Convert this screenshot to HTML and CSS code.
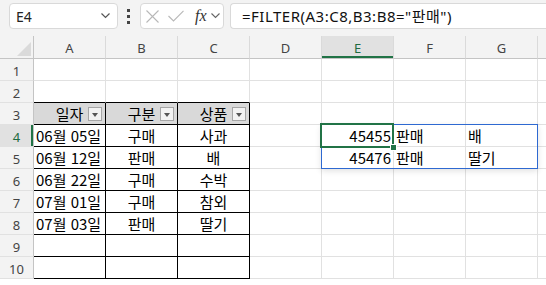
FILE: index.html
```html
<!DOCTYPE html>
<html lang="ko">
<head>
  <meta charset="UTF-8">
  <title>Excel - FILTER</title>
  <link rel="stylesheet" href="styles.css">
</head>
<body>
  <div class="toolbar">
    <div class="namebox">
      <span>E4</span>
      <svg class="chev" width="9" height="6" viewBox="0 0 9 6"><polyline points="0.5,0.5 4.5,4.5 8.5,0.5" fill="none" stroke="#555" stroke-width="1.2"/></svg>
    </div>
    <svg class="dots" width="3" height="15" viewBox="0 0 3 15"><rect x="0" y="0" width="3" height="3" fill="#444"/><rect x="0" y="6" width="3" height="3" fill="#444"/><rect x="0" y="12" width="3" height="3" fill="#444"/></svg>
    <div class="fxbox">
      <svg width="13" height="13" viewBox="0 0 13 13"><path d="M0.5 0.5 L12.5 12.5 M12.5 0.5 L0.5 12.5" stroke="#b8b8b8" stroke-width="1.1" fill="none"/></svg>
      <svg width="16" height="12" viewBox="0 0 16 12"><polyline points="0.5,6 5.5,11 15.5,0.8" stroke="#b8b8b8" stroke-width="1.1" fill="none"/></svg>
      <span class="fx">fx</span>
      <svg class="chev" width="9" height="6" viewBox="0 0 9 6"><polyline points="0.5,0.5 4.5,4.5 8.5,0.5" fill="none" stroke="#666" stroke-width="1.1"/></svg>
    </div>
    <div class="formula">=FILTER(A3:C8,B3:B8="판매")</div>
  </div>

  <div class="sheet">
    <table class="grid">
      <colgroup>
        <col class="c-rh">
        <col class="c-col" span="7">
        <col class="c-rest">
      </colgroup>
      <thead>
        <tr>
          <th class="corner"><span class="tri"></span></th>
          <th>A</th><th>B</th><th>C</th><th>D</th><th class="sel">E</th><th>F</th><th>G</th><th></th>
        </tr>
      </thead>
      <tbody>
        <tr><th>1</th><td></td><td></td><td></td><td></td><td></td><td></td><td></td><td></td></tr>
        <tr><th>2</th><td class="top"></td><td class="top"></td><td class="top"></td><td></td><td></td><td></td><td></td><td></td></tr>
        <tr>
          <th>3</th>
          <td class="t head">일자<span class="filter"></span></td>
          <td class="t head">구분<span class="filter"></span></td>
          <td class="t head">상품<span class="filter"></span></td>
          <td></td><td></td><td></td><td></td><td></td>
        </tr>
        <tr>
          <th class="sel">4</th>
          <td class="t">06월 05일</td><td class="t mid">구매</td><td class="t mid">사과</td>
          <td></td><td class="num">45455</td><td class="txt">판매</td><td class="txt">배</td><td></td>
        </tr>
        <tr>
          <th>5</th>
          <td class="t">06월 12일</td><td class="t mid">판매</td><td class="t mid">배</td>
          <td></td><td class="num">45476</td><td class="txt">판매</td><td class="txt">딸기</td><td></td>
        </tr>
        <tr>
          <th>6</th>
          <td class="t">06월 22일</td><td class="t mid">구매</td><td class="t mid">수박</td>
          <td></td><td></td><td></td><td></td><td></td>
        </tr>
        <tr>
          <th>7</th>
          <td class="t">07월 01일</td><td class="t mid">구매</td><td class="t mid">참외</td>
          <td></td><td></td><td></td><td></td><td></td>
        </tr>
        <tr>
          <th>8</th>
          <td class="t">07월 03일</td><td class="t mid">판매</td><td class="t mid">딸기</td>
          <td></td><td></td><td></td><td></td><td></td>
        </tr>
        <tr><th>9</th><td class="t"></td><td class="t"></td><td class="t"></td><td></td><td></td><td></td><td></td><td></td></tr>
        <tr><th>10</th><td class="t"></td><td class="t"></td><td class="t"></td><td></td><td></td><td></td><td></td><td></td></tr>
      </tbody>
    </table>

    <div class="range"></div>
    <div class="active"><span class="handle"></span></div>
  </div>
</body>
</html>
```

FILE: styles.css
```css
body {
  margin: 0;
  overflow: hidden;
  background-color: #fff;
  font-family: "Noto Sans", "Noto Sans CJK KR", sans-serif;
  color: #000;
}

.toolbar {
  display: flex;
  align-items: flex-start;
  height: 36px;
  padding: 3px 0 0 9px;
  box-sizing: border-box;
  background-color: #f3f3f3;
}

.namebox {
  display: flex;
  align-items: center;
  justify-content: space-between;
  width: 109px;
  height: 26px;
  padding: 0 7px 0 6px;
  box-sizing: border-box;
  background-color: #fff;
  border: 1px solid #d9d9d9;
  border-radius: 4px;
  font-size: 14px;
  color: #222;
}

.dots {
  margin: 6px 10px 0 9px;
}

.fxbox {
  display: flex;
  align-items: center;
  gap: 9px;
  width: 84px;
  height: 26px;
  padding: 0 0 0 5px;
  box-sizing: border-box;
  background-color: #fff;
  border: 1px solid #d9d9d9;
  border-radius: 4px;
}

.fxbox .fx {
  font-family: "Liberation Serif", serif;
  font-style: italic;
  font-size: 16px;
  color: #333;
  margin-left: 2px;
  margin-right: -5px;
}

.formula {
  flex: 1;
  height: 26px;
  margin-left: 6px;
  padding-left: 11px;
  box-sizing: border-box;
  background-color: #fff;
  border: 1px solid #d9d9d9;
  border-right: none;
  border-radius: 4px 0 0 4px;
  font-size: 15px;
  letter-spacing: 0.5px;
  line-height: 24px;
  color: #111;
  white-space: nowrap;
}

.sheet {
  position: relative;
}

.grid {
  table-layout: fixed;
  border-collapse: separate;
  border-spacing: 0;
  width: 568px;
}

.c-rh { width: 34px; }
.c-col { width: 72px; }
.c-rest { width: 30px; }

.grid th,
.grid td {
  box-sizing: border-box;
  padding: 0;
  height: 22px;
  border-right: 1px solid #e1e1e1;
  border-bottom: 1px solid #e1e1e1;
  white-space: nowrap;
  overflow: hidden;
}

.grid thead th {
  height: 23px;
  background-color: #f3f3f3;
  border-right-color: #dadada;
  border-bottom-color: #c4c4c4;
  font-family: "Noto Sans", sans-serif;
  font-weight: normal;
  font-size: 13px;
  color: #444;
  padding-top: 2px;
}

.grid thead th.corner {
  position: relative;
  border-right-color: #c4c4c4;
}

.tri {
  position: absolute;
  right: 2px;
  bottom: 2px;
  width: 0;
  height: 0;
  border-left: 14px solid transparent;
  border-bottom: 14px solid #dadada;
}

.grid tbody th {
  background-color: #f3f3f3;
  border-right-color: #c4c4c4;
  border-bottom-color: #e1e1e1;
  font-family: "Noto Sans", sans-serif;
  font-weight: normal;
  font-size: 13px;
  color: #444;
  padding-top: 2px;
}

.grid th.sel {
  background-color: #e1e1e1;
  color: #1e6b41;
}

.grid thead th.sel {
  box-shadow: inset 0 -2px 0 #217346;
}

.grid tbody th.sel {
  box-shadow: inset -2px 0 0 #217346;
}

.grid td {
  font-family: "Noto Sans CJK KR", sans-serif;
  font-size: 15px;
  line-height: 21px;
}

.grid td.top {
  border-bottom-color: #000;
}

.grid td.t {
  border-right-color: #000;
  border-bottom-color: #000;
  padding-left: 2px;
}

.grid td.head {
  position: relative;
  background-color: #d9d9d9;
  text-align: center;
  padding-left: 0;
}

.grid td.mid {
  text-align: center;
  padding-left: 0;
}

.grid td.num {
  text-align: right;
  padding-right: 2px;
}

.grid td.txt {
  padding-left: 2px;
}

.filter {
  position: absolute;
  right: 3px;
  top: 4px;
  width: 14px;
  height: 14px;
  box-sizing: border-box;
  background-color: #f2f2f2;
  border: 1px solid #a6a6a6;
}

.filter::after {
  content: "";
  position: absolute;
  left: 3px;
  top: 5px;
  border-left: 3.5px solid transparent;
  border-right: 3.5px solid transparent;
  border-top: 4px solid #555;
}

.range {
  position: absolute;
  left: 321px;
  top: 88px;
  width: 217px;
  height: 45px;
  box-sizing: border-box;
  border: 1px solid #2e69d1;
  box-shadow: 0 2px 6px rgba(0, 0, 0, 0.12);
}

.active {
  position: absolute;
  left: 320px;
  top: 87px;
  width: 74px;
  height: 25px;
  box-sizing: border-box;
  border: 2px solid #217346;
}

.handle {
  position: absolute;
  right: -5px;
  bottom: -5px;
  width: 7px;
  height: 7px;
  box-sizing: border-box;
  background-color: #217346;
  border: 1px solid #fff;
}
```
